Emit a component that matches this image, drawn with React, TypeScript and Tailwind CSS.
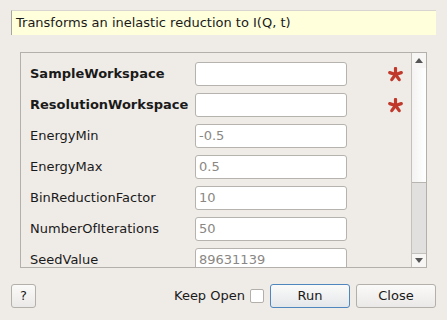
const rows: { label: string; value: string; bold?: boolean; required?: boolean }[] = [
  { label: "SampleWorkspace", value: "", bold: true, required: true },
  { label: "ResolutionWorkspace", value: "", bold: true, required: true },
  { label: "EnergyMin", value: "-0.5" },
  { label: "EnergyMax", value: "0.5" },
  { label: "BinReductionFactor", value: "10" },
  { label: "NumberOfIterations", value: "50" },
  { label: "SeedValue", value: "89631139" },
]

function Asterisk() {
  return (
    <svg width="15" height="15" viewBox="0 0 16 16">
      <g stroke="#c0392b" strokeWidth="3.4" strokeLinecap="round">
        <line x1="8" y1="1.5" x2="8" y2="8" />
        <line x1="8" y1="8" x2="1.8" y2="6" />
        <line x1="8" y1="8" x2="14.2" y2="6" />
        <line x1="8" y1="8" x2="4" y2="13.5" />
        <line x1="8" y1="8" x2="12" y2="13.5" />
      </g>
    </svg>
  )
}

export default function App() {
  return (
    <div
      className="w-[447px] h-[320px] bg-[#efebe7] flex flex-col overflow-hidden text-[13px] text-[#1a1a1a]"
      style={{ fontFamily: '"DejaVu Sans", sans-serif' }}
    >
      {/* Description */}
      <div className="mt-[10px] ml-[11px] w-[425px] h-[25px] bg-[#ffffdc] border-l border-t border-[#a8a49f] border-t-[#d8d4cf] flex items-center pl-[4px]">
        Transforms an inelastic reduction to I(Q, t)
      </div>

      {/* Property list */}
      <div className="mt-[17px] ml-[20px] w-[407px] h-[216px] border border-[#b3afaa] flex">
        <div className="flex-1 overflow-hidden pl-[9px] pt-[9px] flex flex-col gap-[7px]">
          {rows.map((r) => (
            <div key={r.label} className="flex items-center h-[24px] shrink-0">
              <div className={"w-[165px] shrink-0 whitespace-nowrap " + (r.bold ? "font-bold" : "")}>{r.label}</div>
              <div className="w-[152px] shrink-0 h-[24px] bg-white border border-[#b6b2ad] rounded-[3px] flex items-center pl-[3px] text-[#8a8784]">
                {r.value}
              </div>
              <div className="w-[96px] shrink-0 flex justify-center">{r.required && <Asterisk />}</div>
            </div>
          ))}
        </div>
        {/* Scrollbar */}
        <div className="w-[15px] shrink-0 border-l border-[#c4c0bb] flex flex-col">
          <div className="h-[15px] bg-[#f7f6f5] flex items-center justify-center">
            <svg width="8" height="5" viewBox="0 0 8 5">
              <polygon points="0,5 8,5 4,0" fill="#555" />
            </svg>
          </div>
          <div className="h-[115px] bg-gradient-to-r from-[#f4f3f2] to-white border-b border-[#b8b4b0]" />
          <div className="flex-1 bg-[#e2e0de]" />
          <div className="h-[14px] bg-[#f7f6f5] border-t border-[#c4c0bb] flex items-center justify-center">
            <svg width="8" height="5" viewBox="0 0 8 5">
              <polygon points="0,0 8,0 4,5" fill="#555" />
            </svg>
          </div>
        </div>
      </div>

      {/* Buttons */}
      <div className="mt-[16px] flex items-center h-[24px] pl-[11px]">
        <button className="w-[25px] h-[24px] border border-[#b3afaa] rounded-[3px] bg-gradient-to-b from-[#fafaf9] to-[#ebe9e7] flex items-center justify-center">
          ?
        </button>
        <div className="ml-[138px] flex items-center">
          <span>Keep Open</span>
          <div className="ml-[5px] w-[14px] h-[14px] bg-white border border-[#b3afaa] rounded-[2px]" />
        </div>
        <button className="ml-[6px] w-[80px] h-[24px] border border-[#4f86bd] rounded-[3px] bg-gradient-to-b from-[#fafaf9] to-[#e4e7ea] flex items-center justify-center">
          Run
        </button>
        <button className="ml-[6px] w-[80px] h-[24px] border border-[#b3afaa] rounded-[3px] bg-gradient-to-b from-[#fafaf9] to-[#ebe9e7] flex items-center justify-center">
          Close
        </button>
      </div>
    </div>
  )
}
